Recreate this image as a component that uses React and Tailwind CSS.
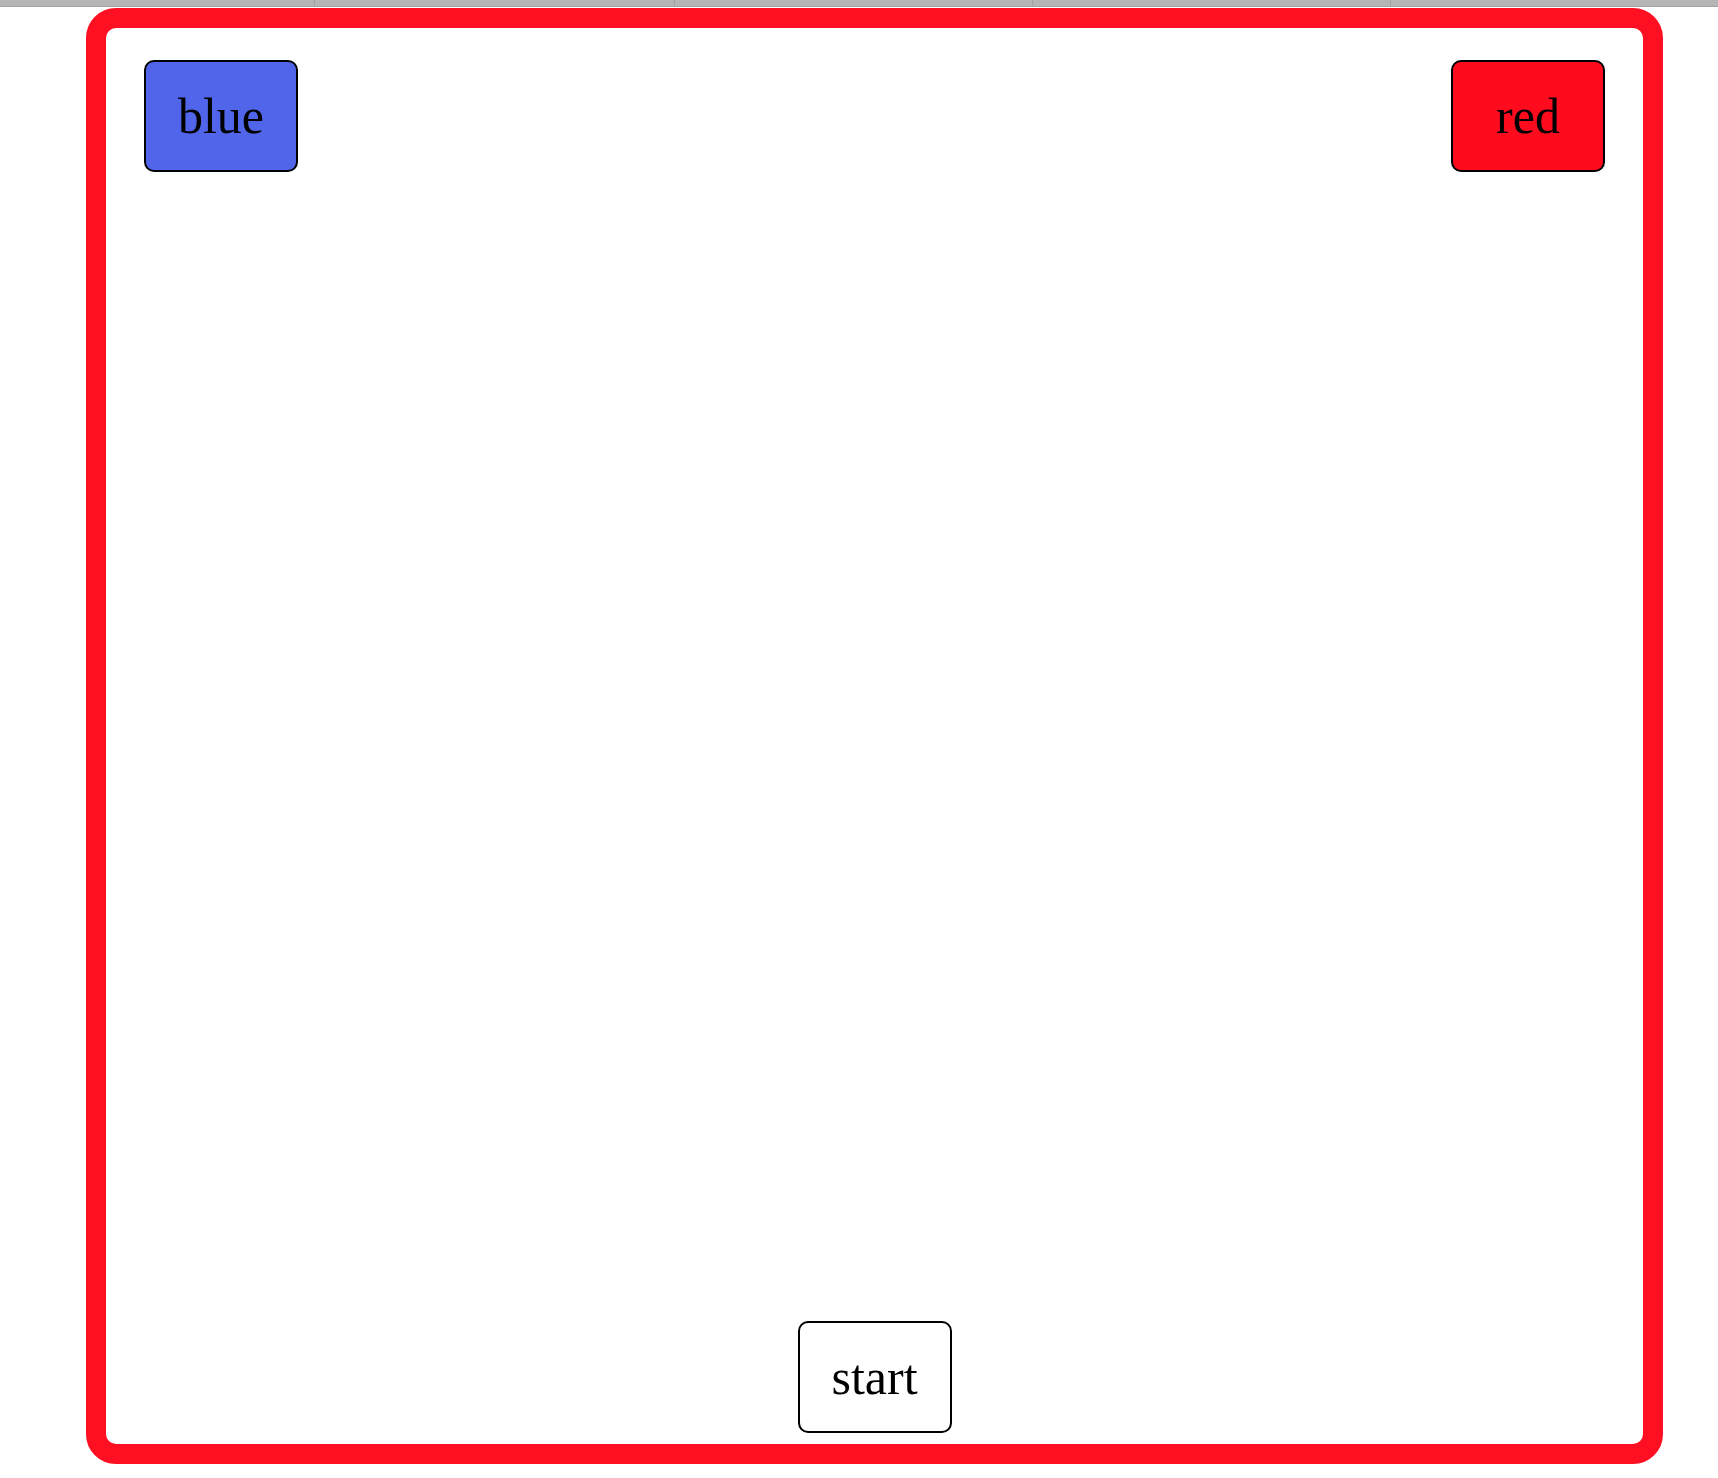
import React from "react";

// top tab strip segments (widths in px)
const tabs = ["w-[315px]", "w-[360px]", "w-[358px]", "w-[358px]", "flex-1"];

const Btn = ({ label, bg }) => (
  <button
    className={`flex h-[112px] w-[154px] items-center justify-center rounded-[10px] border-2 border-black ${bg} text-[50px] leading-none text-black`}
    style={{ fontFamily: '"Liberation Serif", "Times New Roman", serif' }}
  >
    {label}
  </button>
);

const App = () => {
  return (
    <div className="h-[1478px] w-full overflow-hidden bg-white">
      <div className="flex h-[7px] border-b border-[#a3a3a3] bg-[#b5b5b5]">
        {tabs.map((w, i) => (
          <div
            key={i}
            className={`${w} h-full ${i < tabs.length - 1 ? "border-r border-[#a3a3a3]" : ""}`}
          />
        ))}
      </div>

      <div className="ml-[86px] mt-px flex h-[1456px] w-[1577px] flex-col justify-between rounded-[30px] border-[20px] border-[#fe0f22] px-[38px] pb-[11px] pt-[32px]">
        <div className="flex items-start justify-between">
          <Btn label="blue" bg="bg-[#5065e9]" />
          <Btn label="red" bg="bg-[#fe0c1e]" />
        </div>
        <div className="flex justify-center">
          <Btn label="start" bg="bg-white" />
        </div>
      </div>
    </div>
  );
};

export default App;
